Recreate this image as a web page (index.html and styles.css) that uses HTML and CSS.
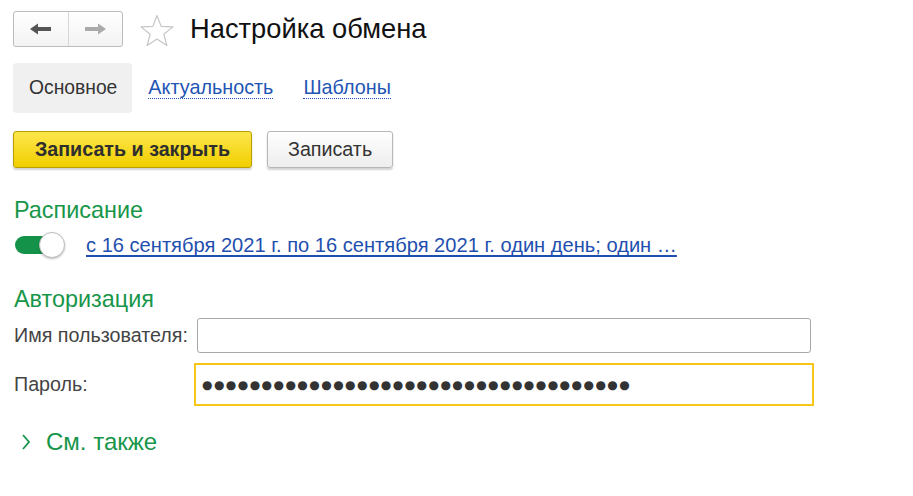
FILE: index.html
```html
<!DOCTYPE html>
<html lang="ru">
<head>
<meta charset="utf-8">
<title>Настройка обмена</title>
<link rel="stylesheet" href="styles.css">
</head>
<body>
<div class="page">
  <div class="header">
    <div class="nav">
      <div class="nav-btn">
        <svg width="22" height="12" viewBox="0 0 22 12"><polygon points="0,6 8,0.5 8,4 21,4 21,8 8,8 8,11.5" fill="#555"/></svg>
      </div>
      <div class="nav-btn">
        <svg width="22" height="12" viewBox="0 0 22 12"><polygon points="22,6 14,0.5 14,4 1,4 1,8 14,8 14,11.5" fill="#aaa"/></svg>
      </div>
    </div>
    <svg class="star" width="36" height="33" viewBox="0 0 36 33"><polygon points="18,1.5 22.2,12.4 34,12.9 24.8,20.2 27.9,31.5 18,25 8.1,31.5 11.2,20.2 2,12.9 13.8,12.4" fill="none" stroke="#c6c6c6" stroke-width="1.2" stroke-linejoin="round"/></svg>
    <h1 class="title">Настройка обмена</h1>
  </div>

  <div class="tabs">
    <div class="tab active">Основное</div>
    <div class="tab"><span class="tab-link">Актуальность</span></div>
    <div class="tab"><span class="tab-link">Шаблоны</span></div>
  </div>

  <div class="actions">
    <button class="btn btn-primary">Записать и закрыть</button>
    <button class="btn">Записать</button>
  </div>

  <div class="section-title">Расписание</div>
  <div class="schedule">
    <div class="toggle"><span class="knob"></span></div>
    <a class="schedule-link" href="#">с 16 сентября 2021 г. по 16 сентября 2021 г. один день; один …</a>
  </div>

  <div class="section-title auth">Авторизация</div>
  <div class="form">
    <div class="label">Имя пользователя:</div>
    <div class="field"></div>
    <div class="label">Пароль:</div>
    <div class="field focused"><span class="dots">●●●●●●●●●●●●●●●●●●●●●●●●●●●●●●●●●●●●</span></div>
  </div>

  <div class="more">
    <svg width="8" height="16" viewBox="0 0 8 16"><polyline points="1,1 7,8 1,15" fill="none" stroke="#17964a" stroke-width="1.8"/></svg>
    <span>См. также</span>
  </div>
</div>
</body>
</html>
```

FILE: styles.css
```css
* { box-sizing: border-box; }
body {
  margin: 0;
  background: #fff;
  font-family: "Liberation Sans", Arial, sans-serif;
  font-size: 19.7px;
  color: #333;
}
.page {
  padding: 11px 0 0 13px;
}
.header {
  display: flex;
  align-items: center;
  height: 36px;
}
.nav {
  display: flex;
  width: 110px;
  height: 36px;
  border: 1px solid #bcbcbc;
  border-radius: 3px;
  background: linear-gradient(#ffffff, #f3f3f3);
}
.nav-btn {
  flex: 1;
  display: flex;
  align-items: center;
  justify-content: center;
}
.nav-btn + .nav-btn {
  border-left: 1px solid #d6d6d6;
}
.star {
  margin-left: 16px;
  margin-top: 3px;
}
.title {
  margin: 0 0 0 15px;
  font-weight: normal;
  font-size: 27.3px;
  color: #111;
  line-height: 36px;
}
.tabs {
  display: flex;
  margin-top: 16px;
  height: 50px;
}
.tab {
  display: flex;
  align-items: center;
  padding: 0 15px 0 16px;
  height: 50px;
  color: #333;
  font-size: 19.3px;
}
.tab.active {
  background: #f0f0f0;
  border-radius: 4px;
  padding: 0 15px 0 16px;
}
.tab-link {
  color: #1f55b4;
  border-bottom: 1px dotted #1f55b4;
  line-height: 21px;
  font-size: 19.8px;
}
.tab + .tab + .tab {
  padding-left: 15px;
}
.actions {
  display: flex;
  gap: 15px;
  margin-top: 18px;
}
.btn {
  height: 37px;
  padding: 0 20px;
  font-family: inherit;
  font-size: 19.7px;
  color: #333;
  border: 1px solid #b7b7b7;
  border-radius: 3px;
  background: linear-gradient(#ffffff, #ededed);
  box-shadow: 0 2px 2px rgba(0, 0, 0, 0.18);
  width: 126px;
}
.btn-primary {
  width: 239px;
  font-weight: bold;
  color: #2e2e2e;
  background: linear-gradient(#fde64c, #f0cf00);
  border-color: #b9a000;
}
.section-title {
  margin-top: 29px;
  font-size: 23.4px;
  line-height: 27px;
  color: #17964a;
  padding-left: 1px;
}
.schedule {
  display: flex;
  align-items: center;
  margin-top: 6px;
  height: 30px;
}
.toggle {
  position: relative;
  width: 50px;
  height: 28px;
  margin-left: 2px;
}
.toggle::before {
  content: "";
  position: absolute;
  left: 0;
  top: 5px;
  width: 40px;
  height: 18px;
  border-radius: 9px;
  background: #15924a;
}
.knob {
  position: absolute;
  left: 24px;
  top: 1px;
  width: 26px;
  height: 26px;
  border-radius: 50%;
  background: #fff;
  border: 1px solid #bdbdbd;
  box-shadow: 0 1px 2px rgba(0, 0, 0, 0.25);
}
.schedule-link {
  margin-left: 21px;
  font-size: 20.1px;
  color: #1f4fae;
  text-decoration: underline;
  text-decoration-skip-ink: none;
  text-underline-offset: 3px;
}
.section-title.auth {
  margin-top: 26px;
}
.form {
  display: grid;
  grid-template-columns: 184px 614px;
  row-gap: 13px;
  margin-top: 5px;
  align-items: center;
}
.label {
  padding-left: 1px;
  color: #444;
}
.field {
  height: 35px;
  border: 1px solid #a9a9a9;
  border-radius: 3px;
  background: #fff;
  display: flex;
  align-items: center;
}
.field.focused {
  height: 37px;
  border: none;
  border-radius: 0;
  outline: 2px solid #f6c719;
  outline-offset: 1px;
}
.dots {
  margin-left: 5px;
  font-family: "DejaVu Sans", sans-serif;
  font-size: 12px;
  letter-spacing: 1.45px;
  color: #333;
}
.more {
  display: flex;
  align-items: center;
  margin-top: 25px;
  padding-left: 9px;
  gap: 16px;
  font-size: 24px;
  color: #17964a;
}
```
